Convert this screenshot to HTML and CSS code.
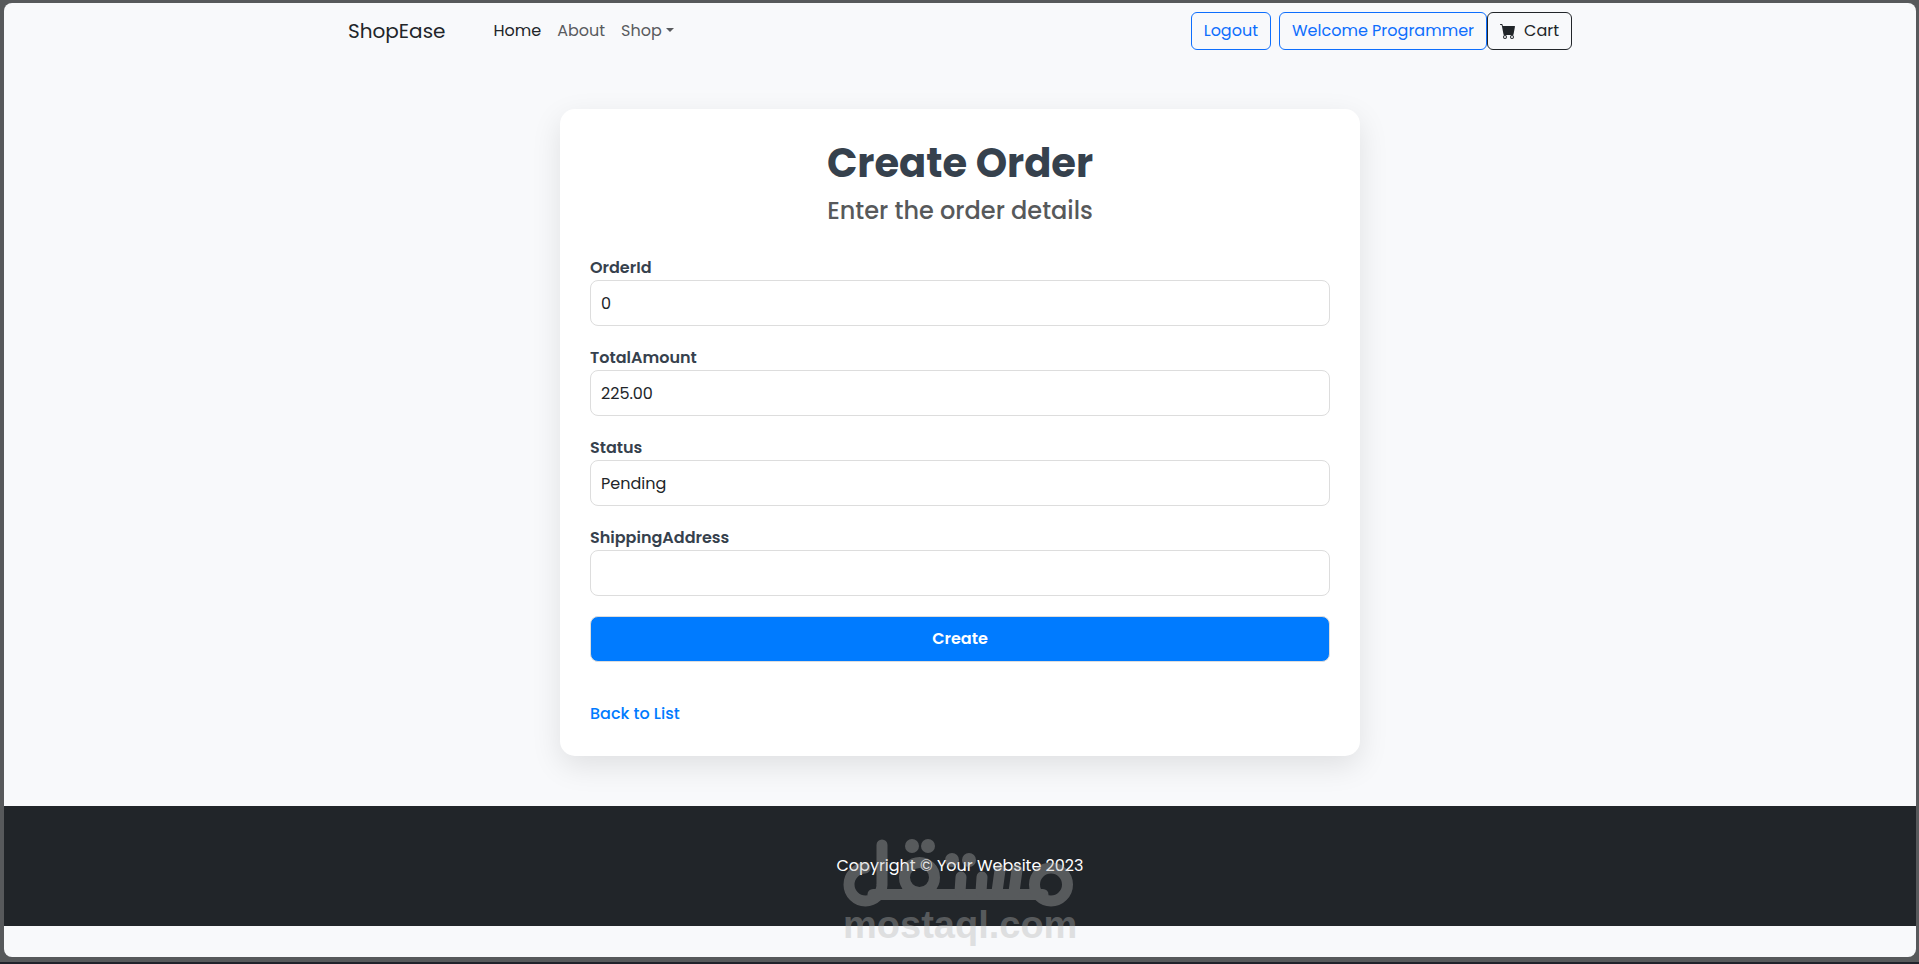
FILE: index.html
```
<!DOCTYPE html>
<html lang="en">
<head>
    <meta charset="UTF-8">
    <meta name="viewport" content="width=device-width, initial-scale=1.0">
    <title>Create Order - ShopEase</title>
    <link rel="stylesheet" href="styles.css">
</head>
<body>
    <div class="page">
        <nav class="navbar">
            <div class="nav-container">
                <a class="navbar-brand" href="#">ShopEase</a>
                <ul class="navbar-nav">
                    <li><a class="nav-link active" href="#">Home</a></li>
                    <li><a class="nav-link" href="#">About</a></li>
                    <li><a class="nav-link dropdown-toggle" href="#">Shop</a></li>
                </ul>
                <div class="nav-actions">
                    <button class="btn btn-outline-primary logout-btn" type="button">Logout</button>
                    <a class="btn btn-outline-primary" href="#">Welcome Programmer</a>
                    <button class="btn btn-outline-dark" type="button">
                        <svg class="cart-icon" viewBox="0 0 16 16" fill="currentColor" aria-hidden="true">
                            <path d="M0 1.5A.5.5 0 0 1 .5 1H2a.5.5 0 0 1 .485.379L2.89 3H14.5a.5.5 0 0 1 .491.592l-1.5 8A.5.5 0 0 1 13 12H4a.5.5 0 0 1-.491-.408L2.01 3.607 1.61 2H.5a.5.5 0 0 1-.5-.5zM5 12a2 2 0 1 0 0 4 2 2 0 0 0 0-4zm7 0a2 2 0 1 0 0 4 2 2 0 0 0 0-4zm-7 1a1 1 0 1 1 0 2 1 1 0 0 1 0-2zm7 0a1 1 0 1 1 0 2 1 1 0 0 1 0-2z"/>
                        </svg>
                        Cart
                    </button>
                </div>
            </div>
        </nav>

        <main class="card">
            <h1>Create Order</h1>
            <h4>Enter the order details</h4>
            <form>
                <div class="form-group">
                    <label for="OrderId">OrderId</label>
                    <input class="form-control" type="text" id="OrderId" value="0">
                </div>
                <div class="form-group">
                    <label for="TotalAmount">TotalAmount</label>
                    <input class="form-control" type="text" id="TotalAmount" value="225.00">
                </div>
                <div class="form-group">
                    <label for="Status">Status</label>
                    <input class="form-control" type="text" id="Status" value="Pending">
                </div>
                <div class="form-group">
                    <label for="ShippingAddress">ShippingAddress</label>
                    <input class="form-control" type="text" id="ShippingAddress">
                </div>
                <button class="submit-btn" type="submit">Create</button>
            </form>
            <a class="back-link" href="#">Back to List</a>
        </main>

        <footer class="footer">
            <p>Copyright &copy; Your Website 2023</p>
            <div class="watermark">
                <svg class="watermark-logo" viewBox="0 0 232 68" aria-hidden="true">
                    <g fill="none" stroke="currentColor" stroke-width="11" stroke-linecap="round">
                        <path d="M22 29A16.500 16.500 0 1 0 39 46V6"/>
                        <path d="M30 55.500H200"/>
                        <circle cx="76.500" cy="38.500" r="15"/>
                        <circle cx="208" cy="45.500" r="16.500"/>
                        <path d="M117 53L118 38M138 53L139 38M154 53L157 31M171 53L174 31"/>
                    </g>
                    <g fill="currentColor">
                        <circle cx="69" cy="7" r="7"/>
                        <circle cx="85" cy="7" r="7"/>
                        <circle cx="109" cy="21" r="7"/>
                        <circle cx="126" cy="21" r="7"/>
                    </g>
                </svg>
                <span>mostaql.com</span>
            </div>
        </footer>
    </div>
</body>
</html>
```
FILE: styles.css
```
* {
    margin: 0;
    padding: 0;
    box-sizing: border-box;
}

body {
    min-height: 100vh;
    display: flex;
    padding: 3px 3px 5px 4px;
    background: #57595b;
    border-bottom: 2px solid #20222b;
    font-family: Poppins, Inter, "Open Sans", sans-serif;
    font-size: 16px;
    line-height: 24px;
    color: #212529;
}

a {
    text-decoration: none;
}

.page {
    flex: 1;
    background: #f8f9fb;
    border-radius: 8px;
}

/* Navbar */
.nav-container {
    display: flex;
    align-items: center;
    max-width: 1320px;
    min-height: 56px;
    margin: 0 auto;
    padding: 0 48px;
}

.navbar-brand {
    margin-right: 40px;
    font-size: 20px;
    color: #212529;
}

.navbar-nav {
    display: flex;
    list-style: none;
}

.nav-link {
    padding: 8px;
    color: #595b5e;
}

.nav-link.active {
    color: #212529;
}

.dropdown-toggle::after {
    content: "";
    display: inline-block;
    margin-left: 4px;
    vertical-align: 4px;
    border-top: 4px solid;
    border-right: 4px solid transparent;
    border-left: 4px solid transparent;
}

.nav-actions {
    display: flex;
    margin-left: auto;
}

.btn {
    display: flex;
    align-items: center;
    padding: 6px 12px;
    border: 1px solid;
    border-radius: 6px;
    background: transparent;
    font: inherit;
    cursor: pointer;
}

.logout-btn {
    margin-right: 8px;
}

.btn-outline-primary {
    color: #0d6efd;
}

.btn-outline-dark {
    color: #212529;
}

.cart-icon {
    width: 16px;
    height: 16px;
    margin-right: 8px;
}

/* Order form */
.card {
    max-width: 800px;
    margin: 50px auto;
    padding: 30px;
    background: #fff;
    border-radius: 15px;
    box-shadow: 0 10px 30px rgba(0, 0, 0, 0.1);
}

h1 {
    margin-bottom: 8px;
    font-size: 40px;
    line-height: 48px;
    text-align: center;
    color: #36414d;
}

h4 {
    margin-bottom: 30px;
    font-size: 24px;
    font-weight: 500;
    line-height: 31px;
    text-align: center;
    color: #57595b;
}

.form-group {
    margin-bottom: 20px;
}

label {
    display: block;
    font-weight: 600;
    color: #36414d;
}

.form-control,
.submit-btn {
    display: block;
    width: 100%;
    height: 46px;
    padding: 10px;
    border: 1px solid #ddd;
    border-radius: 8px;
    font: inherit;
    color: #212529;
}

.submit-btn {
    margin-bottom: 40px;
    background: #007bff;
    font-weight: 600;
    color: #fff;
    cursor: pointer;
}

.back-link {
    display: block;
    font-weight: 500;
    color: #007bff;
}

/* Footer */
.footer {
    position: relative;
    padding: 48px 0;
    background: #212529;
    text-align: center;
    color: #fff;
}

.watermark {
    position: absolute;
    top: 33px;
    left: 50%;
    width: 232px;
    margin-left: -117px;
    color: #b4b4b4;
    opacity: 0.37;
    pointer-events: none;
    font-family: "Liberation Sans", Arial, sans-serif;
    font-size: 38px;
    font-weight: bold;
    line-height: 36px;
}

.watermark-logo {
    display: block;
    width: 232px;
    height: 68px;
}
```
